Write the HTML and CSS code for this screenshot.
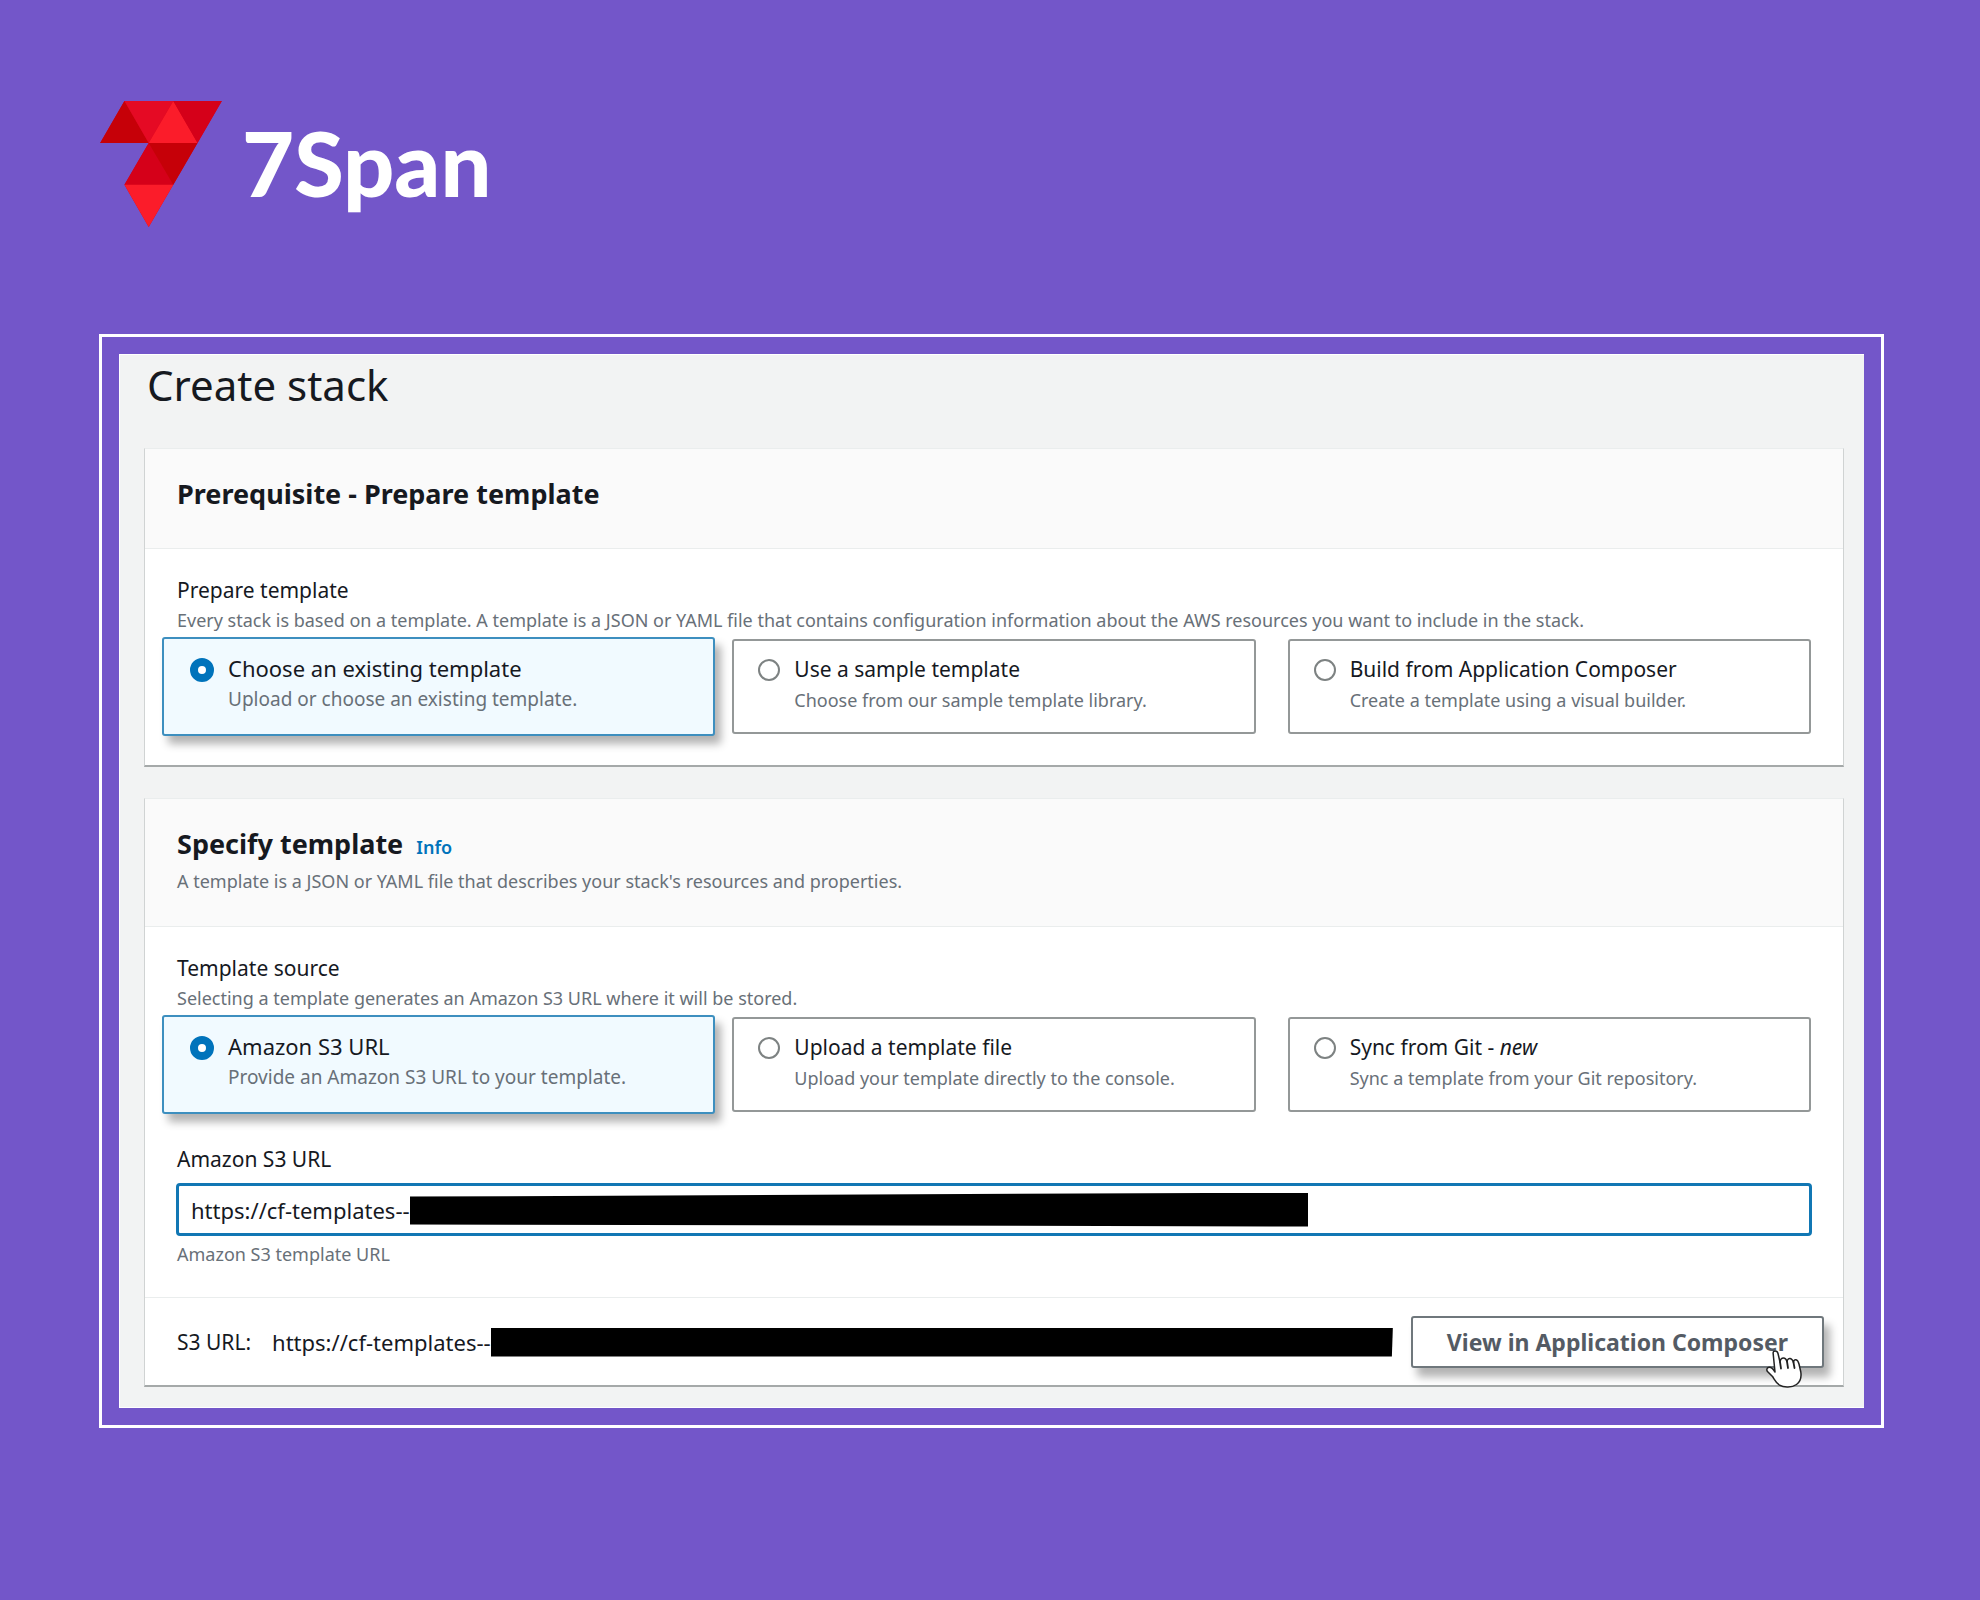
FILE: index.html
```html
<!DOCTYPE html>
<html lang="en">
<head>
  <meta charset="utf-8">
  <meta name="viewport" content="width=device-width, initial-scale=1">
  <title>Create stack - 7Span</title>
  <link rel="stylesheet" href="styles.css">
</head>
<body>
  <header class="brand">
    <svg class="brand-mark" viewBox="60 62 366 379" aria-hidden="true">
      <polygon fill="#d50019" points="133,62 426,62 206,441 133,314 206,188 60,188"/>
      <polygon fill="#c60008" points="60,188 133,62 206,188"/>
      <polygon fill="#e50a24" points="133,62 280,62 206,188"/>
      <polygon fill="#fb1c2a" points="280,62 353,188 206,188"/>
      <polygon fill="#d50019" points="280,62 426,62 353,188"/>
      <polygon fill="#d50019" points="206,188 280,314 133,314"/>
      <polygon fill="#c60008" points="206,188 353,188 280,314"/>
      <polygon fill="#fb1c2a" points="133,314 280,314 206,441"/>
    </svg>
    <span class="brand-name">7Span</span>
  </header>

  <div class="frame">
    <main class="panel">
      <h1 class="page-title">Create stack</h1>

      <section class="card">
        <header class="card-header">
          <h2 class="card-title">Prerequisite - Prepare template</h2>
        </header>
        <div class="card-body">
          <fieldset class="group">
            <legend class="label">Prepare template</legend>
            <p class="hint">Every stack is based on a template. A template is a JSON or YAML file that contains configuration information about the AWS resources you want to include in the stack.</p>
            <div class="tiles">
              <label class="tile tile-selected">
                <input class="radio" type="radio" name="prepare" checked>
                <span class="tile-text"><span class="tile-title">Choose an existing template</span><span class="tile-hint">Upload or choose an existing template.</span></span>
              </label>
              <label class="tile">
                <input class="radio" type="radio" name="prepare">
                <span class="tile-text"><span class="tile-title">Use a sample template</span><span class="tile-hint">Choose from our sample template library.</span></span>
              </label>
              <label class="tile">
                <input class="radio" type="radio" name="prepare">
                <span class="tile-text"><span class="tile-title">Build from Application Composer</span><span class="tile-hint">Create a template using a visual builder.</span></span>
              </label>
            </div>
          </fieldset>
        </div>
      </section>

      <section class="card">
        <header class="card-header">
          <div class="card-heading">
            <h2 class="card-title">Specify template</h2>
            <a class="info" href="#info">Info</a>
          </div>
          <p class="card-note">A template is a JSON or YAML file that describes your stack's resources and properties.</p>
        </header>
        <div class="card-body">
          <fieldset class="group">
            <legend class="label">Template source</legend>
            <p class="hint">Selecting a template generates an Amazon S3 URL where it will be stored.</p>
            <div class="tiles">
              <label class="tile tile-selected">
                <input class="radio" type="radio" name="source" checked>
                <span class="tile-text"><span class="tile-title">Amazon S3 URL</span><span class="tile-hint">Provide an Amazon S3 URL to your template.</span></span>
              </label>
              <label class="tile">
                <input class="radio" type="radio" name="source">
                <span class="tile-text"><span class="tile-title">Upload a template file</span><span class="tile-hint">Upload your template directly to the console.</span></span>
              </label>
              <label class="tile">
                <input class="radio" type="radio" name="source">
                <span class="tile-text"><span class="tile-title">Sync from Git - <em>new</em></span><span class="tile-hint">Sync a template from your Git repository.</span></span>
              </label>
            </div>
          </fieldset>
          <div class="url-group">
            <label class="label" for="s3-url">Amazon S3 URL</label>
            <div class="url-field">
              <input class="url-input" id="s3-url" type="text" value="https://cf-templates--">
              <span class="redacted redacted-field"></span>
            </div>
            <p class="hint">Amazon S3 template URL</p>
          </div>
        </div>
        <footer class="card-footer">
          <span class="footer-label">S3 URL:</span>
          <span class="footer-url">https://cf-templates--</span>
          <span class="redacted redacted-footer"></span>
          <button class="composer-button" type="button">View in Application Composer
            <svg class="pointer" viewBox="0 0 36 38" aria-hidden="true">
              <path d="M9 22 L7.200 4 C6.800 1.500 8 .9 9.300 .9 C10.600 .9 11.600 1.800 12 3.500 L14 12 C14.300 9.500 15.500 8 17.500 8 C19.400 8 20.300 9.300 21 11.500 C21.300 9.500 22.500 8.300 24.200 8.600 C26 9 26.800 10.300 27.500 12.500 C27.700 10.500 28.500 9.500 30 9.700 C32 10 32.500 12 33 14 L34.800 22 C35.700 28 34 32 30.500 34.500 C26 37.700 18 38 13.500 35.200 C10 33 8.500 29.500 6.500 26.500 L1.500 21.500 C.3 20 .8 18 2.500 17.400 C4.800 16.800 7 18.800 9 22 Z" fill="#fff" stroke="#222" stroke-width="1.500" stroke-linejoin="round"/>
              <path d="M14 12 L15 18.500 M21 11.500 L22 18 M27.500 12.500 L28.500 18" fill="none" stroke="#222" stroke-width="1.800" stroke-linecap="round"/>
            </svg>
          </button>
        </footer>
      </section>
    </main>
  </div>
</body>
</html>
```
FILE: styles.css
```css
* {
  box-sizing: border-box;
}

body {
  min-height: 100vh;
  margin: 0;
  padding: 101px 96px 96px 99px;
  background: #7356c9;
  color: #16191f;
  font-family: "Noto Sans", "Open Sans", sans-serif;
  font-size: 21px;
  line-height: 28px;
}

h1,
h2,
p {
  margin: 0;
}

/* Brand */
.brand {
  display: flex;
  align-items: flex-start;
  gap: 20px;
  margin: 0 1px 107px;
}

.brand-mark {
  display: block;
  width: 122px;
  height: 126px;
}

.brand-name {
  color: #fff;
  font-family: Lato, sans-serif;
  font-size: 90px;
  font-weight: 900;
  line-height: 122px;
}

/* Framed console panel */
.frame {
  padding: 17px;
  border: 3px solid #fff;
}

.panel {
  display: flex;
  flex-direction: column;
  padding: 2px 20px 20px 24px;
  border: 1px solid #fff;
  border-right: 0;
  background: #f2f3f3;
}

.page-title {
  margin: 0 3px 35px;
  font-size: 42px;
  font-weight: 400;
  line-height: 56px;
}

.card {
  border: 1px solid #d0d3d3;
  border-top-color: #eaeded;
  border-bottom: 2px solid #a5a9a9;
  background: #fff;
}

.card + .card {
  margin-top: 31px;
}

.card-header {
  padding: 26px 32px 35px;
  border-bottom: 1px solid #eaeded;
  background: #fafafa;
}

.card-heading {
  display: flex;
  align-items: baseline;
  gap: 13px;
}

.card-title {
  font-size: 27px;
  font-weight: 700;
  line-height: 38px;
}

.info {
  color: #0073bb;
  font-size: 18px;
  font-weight: 600;
  line-height: 24px;
  text-decoration: none;
}

.card-note,
.hint,
.tile-hint {
  color: #687078;
  font-size: 18px;
  line-height: 24px;
}

.card-note {
  margin: 6px 0 -2px;
}

.card-body {
  padding: 27px 32px 31px;
}

.group {
  min-width: 0;
  margin: 0;
  padding: 0;
  border: 0;
}

.label {
  display: block;
  margin-bottom: 4px;
  padding: 0;
}

/* Radio tiles */
.tiles {
  display: grid;
  grid-template-columns: repeat(3, minmax(0, 1fr));
  gap: 32px;
  margin-top: 7px;
}

.tile {
  display: flex;
  align-items: flex-start;
  gap: 14px;
  padding: 14px 24px 20px;
  border: 2px solid #949898;
  border-radius: 3px;
  background: #fff;
}

.tile-selected {
  margin: -2px -15px;
  padding: 15px 26px 22px;
  border-color: #3d8fbf;
  background: #f1faff;
  box-shadow: 6px 8px 9px rgba(0, 0, 0, 0.3);
}

.radio {
  flex: none;
  width: 22px;
  height: 22px;
  margin: 4px 0 0;
  border: 2px solid #7d8282;
  border-radius: 50%;
  background: #fff;
  appearance: none;
}

.radio:checked {
  width: 24px;
  height: 24px;
  border: 8px solid #0073bb;
}

.tile-text {
  display: flex;
  flex-direction: column;
  gap: 5px;
}

.tile-selected .tile-title {
  font-size: 22px;
}

.tile-selected .tile-hint {
  font-size: 19px;
}

/* URL field */
.url-group {
  margin-top: 33px;
}

.url-group .label {
  margin-bottom: 10px;
}

.url-field {
  display: flex;
  align-items: center;
  margin: 0 -1px 6px;
  padding-left: 12px;
  border: 3px solid #1177b4;
  border-radius: 4px;
  background: #fff;
}

.url-input {
  flex: none;
  width: 219px;
  height: 47px;
  padding: 0;
  border: 0;
  outline: 0;
  background: none;
  color: inherit;
  font: inherit;
  font-size: 22px;
}

.redacted {
  background: #000;
}

.redacted-field {
  flex: 0 1 898px;
  height: 34px;
  clip-path: polygon(0 12%, 100% 0, 100% 100%, 0 94%);
}

.card-footer {
  display: flex;
  align-items: center;
  padding: 18px 19px 17px 32px;
  border-top: 1px solid #eaeded;
}

.footer-label {
  margin-right: 21px;
}

.footer-url {
  font-size: 22px;
}

.redacted-footer {
  flex: 1;
  height: 29px;
  margin-right: 18px;
  clip-path: polygon(0 0, 100% 0, calc(100% - 1px) 100%, 0 100%);
}

.composer-button {
  position: relative;
  height: 52px;
  padding: 0 34px;
  border: 2px solid #6f777c;
  border-radius: 3px;
  background: #fff;
  box-shadow: 6px 9px 9px rgba(0, 0, 0, 0.3);
  color: #545b64;
  font: inherit;
  font-size: 23px;
  font-weight: 700;
  white-space: nowrap;
}

.pointer {
  position: absolute;
  right: 20px;
  bottom: -22px;
  width: 36px;
  height: 38px;
}
```
